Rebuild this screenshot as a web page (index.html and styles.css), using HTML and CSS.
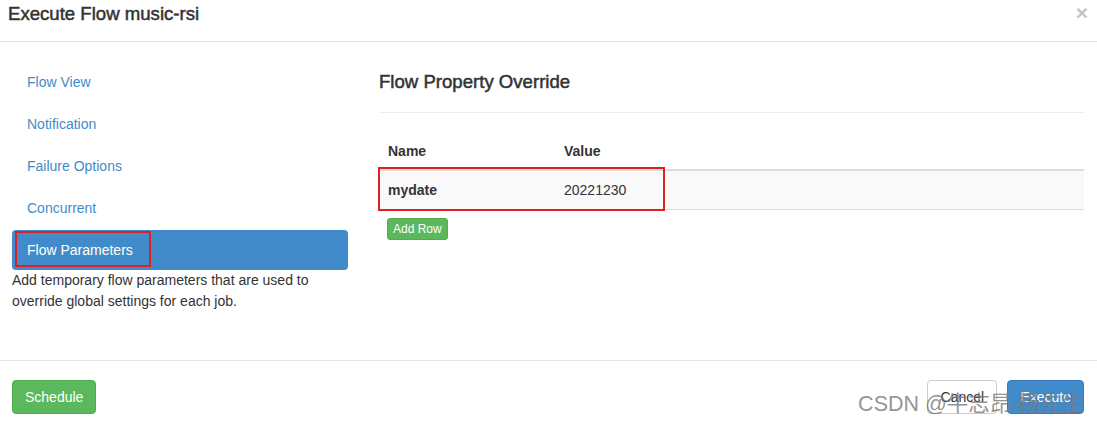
FILE: index.html
```html
<!DOCTYPE html>
<html lang="en">
<head>
    <meta charset="UTF-8">
    <title>Execute Flow</title>
    <link rel="stylesheet" href="styles.css">
</head>
<body>

    <div class="modal">
        <!-- Header -->
        <div class="modal-header">
            <h4 class="modal-title">Execute Flow music-rsi</h4>
            <span class="close">&times;</span>
        </div>

        <!-- Body -->
        <div class="modal-body">
            <div class="side">
                <ul class="nav">
                    <li><a href="#">Flow View</a></li>
                    <li><a href="#">Notification</a></li>
                    <li><a href="#">Failure Options</a></li>
                    <li><a href="#">Concurrent</a></li>
                    <li class="active">
                        <a href="#">Flow Parameters</a>
                        <span class="mark mark-nav"></span>
                    </li>
                </ul>
                <p class="help">Add temporary flow parameters that are used to override global settings for each job.</p>
            </div>

            <div class="main">
                <h4 class="section-title">Flow Property Override</h4>
                <hr>
                <div class="table-wrap">
                    <table class="props">
                        <thead>
                            <tr>
                                <th class="col-name">Name</th>
                                <th>Value</th>
                            </tr>
                        </thead>
                        <tbody>
                            <tr>
                                <td class="col-name"><b>mydate</b></td>
                                <td>20221230</td>
                            </tr>
                        </tbody>
                    </table>
                    <span class="mark mark-row"></span>
                </div>
                <button class="btn btn-success btn-xs">Add Row</button>
            </div>
        </div>

        <!-- Footer -->
        <div class="modal-footer">
            <button class="btn btn-success">Schedule</button>
            <div class="actions">
                <button class="btn btn-default">Cancel</button>
                <button class="btn btn-primary">Execute</button>
            </div>
        </div>

        <div class="watermark">CSDN @牛志昂-杨先生</div>
    </div>

</body>
</html>
```

FILE: styles.css
```css
body {
    font-family: "Liberation Sans", Arial, sans-serif;
    font-size: 14px;
    line-height: 20px;
    color: #333;
    margin: 0;
    padding: 0;
    background-color: #fff;
}

.modal {
    width: 1097px;
    height: 424px;
    position: relative;
    overflow: hidden;
}

/* Header */
.modal-header {
    display: flex;
    justify-content: space-between;
    height: 42px;
    padding: 4px 9px 0 8px;
    box-sizing: border-box;
    border-bottom: 1px solid #e5e5e5;
}

.modal-title {
    margin: 0;
    font-size: 18.6px;
    line-height: 20px;
    font-weight: normal;
    -webkit-text-stroke: 0.5px #333;
    color: #333;
}

.close {
    font-size: 21px;
    font-weight: bold;
    line-height: 18px;
    color: #c4c4c4;
}

/* Body */
.modal-body {
    display: grid;
    grid-template-columns: 336px 1fr;
    column-gap: 31px;
    height: 318px;
    padding: 20px 13px 0 12px;
    box-sizing: border-box;
}

.nav {
    list-style: none;
    margin: 0;
    padding: 0;
}

.nav li {
    position: relative;
    margin-bottom: 2px;
}

.nav li a {
    display: block;
    padding: 10px 15px;
    color: #428bca;
    text-decoration: none;
    border-radius: 4px;
}

.nav li.active {
    margin-bottom: 0;
}

.nav li.active a {
    background-color: #428bca;
    color: #fff;
}

.help {
    margin: 0;
    line-height: 21px;
}

.section-title {
    margin: 10px 0 0;
    font-size: 18.6px;
    line-height: 20px;
    font-weight: normal;
    -webkit-text-stroke: 0.5px #333;
}

hr {
    margin: 20px 0 20px;
    border: 0;
    border-top: 1px solid #eee;
}

.table-wrap {
    position: relative;
}

.props {
    width: 100%;
    border-collapse: collapse;
}

.props th {
    text-align: left;
    padding: 8px 8px 8px 9px;
    border-bottom: 2px solid #ddd;
}

.props td {
    padding: 9px 8px 9px 9px;
    background-color: #f9f9f9;
    border-bottom: 1px solid #ddd;
}

.props .col-name {
    width: 159px;
}

/* Red annotation boxes */
.mark {
    position: absolute;
    border: 2px solid #e02020;
    box-sizing: border-box;
    pointer-events: none;
}

.mark-nav {
    left: 3px;
    top: 1px;
    width: 136px;
    height: 36px;
}

.mark-row {
    left: -1px;
    top: 34px;
    width: 287px;
    height: 44px;
}

/* Buttons */
.btn {
    font-family: inherit;
    font-size: 14px;
    line-height: 20px;
    padding: 6px 12px;
    border: 1px solid transparent;
    border-radius: 4px;
    cursor: pointer;
}

.btn-xs {
    font-size: 12px;
    line-height: 18px;
    padding: 1px 5px;
    border-radius: 3px;
    margin: 8px 0 0 8px;
}

.btn-success {
    background-color: #5cb85c;
    border-color: #4cae4c;
    color: #fff;
}

.btn-primary {
    background-color: #428bca;
    border-color: #357ebd;
    color: #fff;
}

.btn-default {
    background-color: #fff;
    border-color: #ccc;
    color: #333;
}

/* Footer */
.modal-footer {
    display: flex;
    justify-content: space-between;
    align-items: flex-start;
    padding: 19px 13px 0 12px;
    border-top: 1px solid #e5e5e5;
}

.actions {
    display: flex;
    gap: 10px;
}

.btn-default {
    min-width: 70px;
}

.watermark {
    position: absolute;
    right: 14px;
    bottom: 8px;
    font-size: 21.5px;
    line-height: 24px;
    color: rgba(120, 120, 120, 0.8);
    font-family: "Liberation Sans", "Noto Sans CJK SC", sans-serif;
    pointer-events: none;
}
```
